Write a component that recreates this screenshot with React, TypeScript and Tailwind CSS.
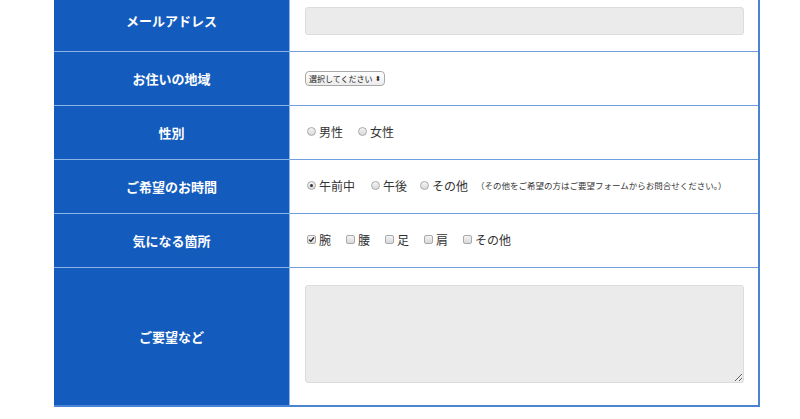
const Radio = ({ checked = false }: { checked?: boolean }) => {
  return (
    <span className="inline-flex items-center justify-center w-[9px] h-[9px] rounded-full border border-[#a9a9a9] bg-gradient-to-b from-[#f4f4f4] to-[#d9d9d9] mr-[3px]">
      {checked && <span className="w-[3px] h-[3px] rounded-full bg-[#333]" />}
    </span>
  );
};

const Check = ({ checked = false }: { checked?: boolean }) => {
  return (
    <span className="inline-flex items-center justify-center w-[9px] h-[9px] rounded-[2px] border border-[#a9a9a9] bg-gradient-to-b from-[#f4f4f4] to-[#d9d9d9] mr-[3px]">
      {checked && (
        <svg width="7" height="7" viewBox="0 0 7 7">
          <path d="M1 3.6 L2.8 5.3 L6 1.4" fill="none" stroke="#222" strokeWidth="1.3" />
        </svg>
      )}
    </span>
  );
};

const Row = ({
  label,
  height,
  children,
}: {
  label: string;
  height: string;
  children: React.ReactNode;
}) => {
  return (
    <div className={`flex ${height}`}>
      <div className="w-[236px] shrink-0 bg-[#135cbd] border-r border-b border-[#8db5e8] flex items-center justify-center">
        <p className="text-white font-bold text-[13px]">{label}</p>
      </div>
      <div className="flex-1 border-b border-[#6f9fe0] flex items-center pl-[15px] pr-[14px]">
        {children}
      </div>
    </div>
  );
};

const App = () => {
  return (
    <div
      className="w-[800px] h-[419px] overflow-hidden bg-white"
      style={{ fontFamily: '"Noto Sans CJK JP", "Noto Sans", sans-serif' }}
    >
      <div className="ml-[54px] w-[706px] -mt-[10px] border-r-2 border-[#4a84d2]">
        <Row label="メールアドレス" height="h-[62px]">
          <div className="w-full h-[28px] bg-[#ebebeb] border border-[#dcdcdc] rounded-[3px]" />
        </Row>

        <Row label="お住いの地域" height="h-[54px]">
          <div className="flex items-center h-[15px] px-[3px] border border-[#a8a8a8] rounded-[4px] bg-gradient-to-b from-white to-[#ececec] text-[8px] text-[#222] leading-none">
            選択してください
            <span className="ml-[2px] text-[7px]">⬍</span>
          </div>
        </Row>

        <Row label="性別" height="h-[54px]">
          <div className="flex items-center ml-[2px] text-[12px] text-[#333] mt-[-2px]">
            <Radio />
            <span>男性</span>
            <span className="ml-[15px]" />
            <Radio />
            <span>女性</span>
          </div>
        </Row>

        <Row label="ご希望のお時間" height="h-[54px]">
          <div className="flex items-center ml-[2px] text-[12px] text-[#333] mt-[-2px]">
            <Radio checked />
            <span>午前中</span>
            <span className="ml-[16px]" />
            <Radio />
            <span>午後</span>
            <span className="ml-[13px]" />
            <Radio />
            <span>その他</span>
            <span className="ml-[8px] text-[8.5px]">（その他をご希望の方はご要望フォームからお問合せください。）</span>
          </div>
        </Row>

        <Row label="気になる箇所" height="h-[54px]">
          <div className="flex items-center ml-[2px] text-[12px] text-[#333] mt-[-2px]">
            <Check checked />
            <span>腕</span>
            <span className="ml-[15px]" />
            <Check />
            <span>腰</span>
            <span className="ml-[15px]" />
            <Check />
            <span>足</span>
            <span className="ml-[15px]" />
            <Check />
            <span>肩</span>
            <span className="ml-[15px]" />
            <Check />
            <span>その他</span>
          </div>
        </Row>

        <div className="flex h-[139px] border-b-2 border-[#4a84d2]">
          <div className="w-[236px] shrink-0 bg-[#135cbd] border-r border-[#8db5e8] flex items-center justify-center">
            <p className="text-white font-bold text-[13px]">ご要望など</p>
          </div>
          <div className="flex-1 flex items-center pl-[15px] pr-[14px]">
            <textarea className="w-full h-[98px] bg-[#ebebeb] border border-[#dcdcdc] rounded-[3px] mb-[6px]" />
          </div>
        </div>
      </div>
    </div>
  );
};

export default App;
